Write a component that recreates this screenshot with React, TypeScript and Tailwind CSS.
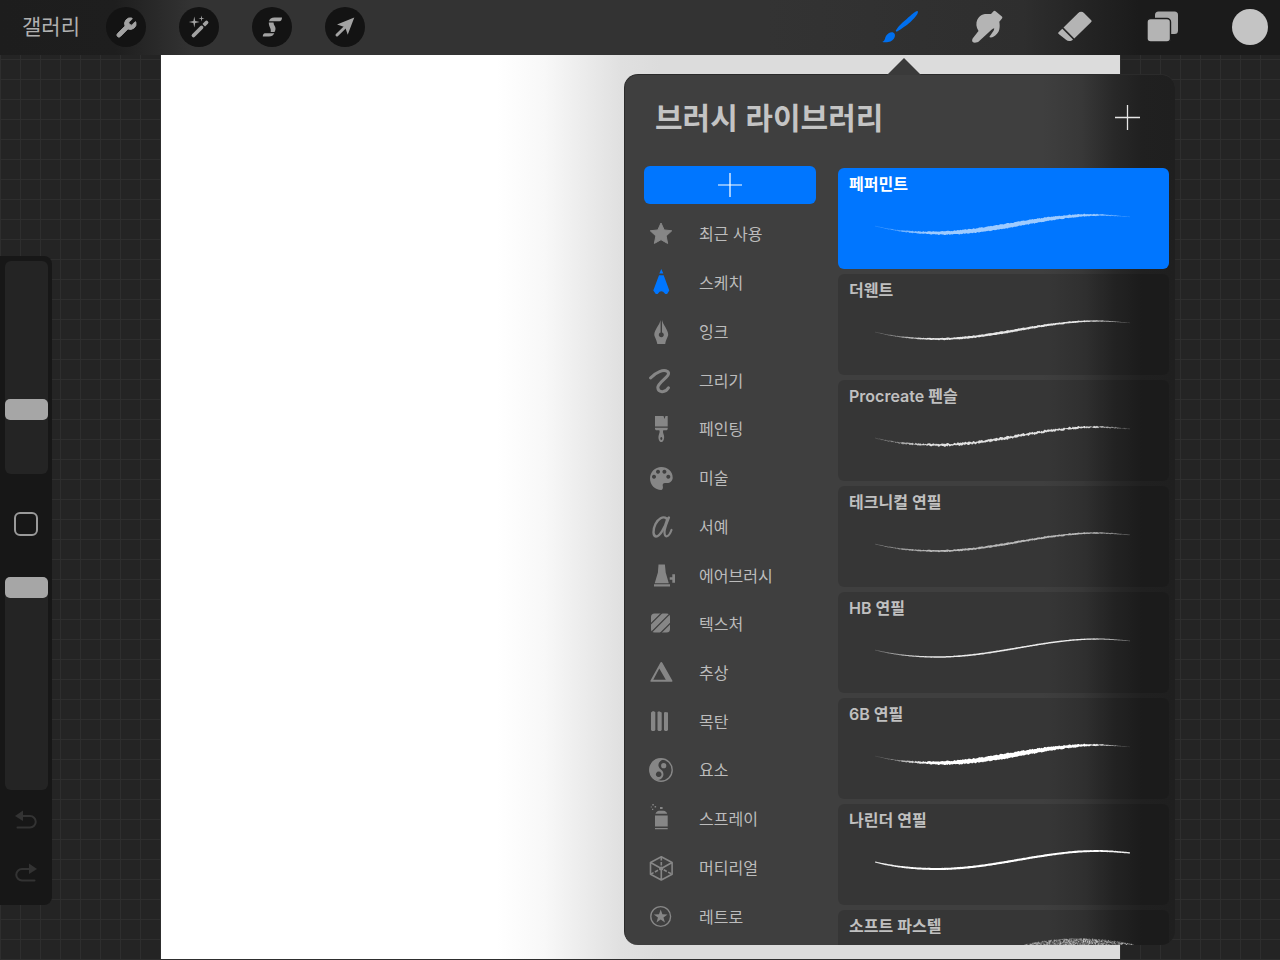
import { useState } from 'react'
import type { ReactNode } from 'react'
import { Wrench } from 'lucide-react'

const star = (cx: number, cy: number, outer: number, inner: number, points = 5) =>
  Array.from({ length: points * 2 }, (_, i) => {
    const r = i % 2 ? inner : outer
    const a = (Math.PI * i) / points - Math.PI / 2
    return `${(cx + r * Math.cos(a)).toFixed(2)},${(cy + r * Math.sin(a)).toFixed(2)}`
  }).join(' ')

const CATEGORIES: { name: string; icon: ReactNode }[] = [
  {
    name: '최근 사용',
    icon: <polygon points={star(12, 12.3, 11.3, 5.4)} stroke="currentColor" strokeLinejoin="round" />,
  },
  {
    name: '스케치',
    icon: <path d="M12.300-2l2 4.400h-4zM10 4.300h4.700l5.600 15.200-2.200 3.500h-1.800l-2.200-2.200-1.800-.6-1.800.6L8.600 23H6.800l-2.500-3.500z" />,
  },
  {
    name: '잉크',
    icon: (
      <path d="M11.600 0v12.400a2.500 2.500 0 1 0 1.400 0V0c1 5 6.200 9.800 6.200 14.500 0 2.500-2.200 4.500-3 9.500H8.300c-.8-5-3-7-3-9.500C5.300 9.800 10.600 5 11.600 0z" />
    ),
  },
  {
    name: '그리기',
    icon: (
      <path
        d="M1.500 9C7 3 14.500 0 18.500 2.500 23.500 6.500 9 12.500 8.800 18.500 9 23.500 16 24.500 19.500 18.800"
        fill="none" stroke="currentColor" strokeWidth="3" strokeLinecap="round"
      />
    ),
  },
  {
    name: '페인팅',
    icon: (
      <path
        fillRule="evenodd"
        d="M6-1h8.500l1 3 1-3h2.200V9.500H6zM6 10.700h12.700v1.500l-1 1h-3.400c-.8 1.500 0 3 .6 5 .8 3-.4 6.800-2.600 6.800s-3.400-3.800-2.600-6.800c.6-2 1.400-3.500.6-5H7l-1-1zM12.300 20a1 1.500 0 1 0 .01 0z"
      />
    ),
  },
  {
    name: '미술',
    icon: (
      <path
        fillRule="evenodd"
        d="M12.300 1C18.600 1 23.700 5.500 23.700 11.500c0 3.500-2.500 5.500-5.700 5.500h-2c-2 0-2.700 1.500-2.200 3 .4 1.300 0 4-1.500 4C6 24 1 19 1 12.500S6 1 12.300 1zM9 3.700a2 2 0 1 0 .01 0zM15.400 3.700a2 2 0 1 0 .01 0zM5 8.800a2 2 0 1 0 .01 0zM19.300 8.800a2 2 0 1 0 .01 0z"
      />
    ),
  },
  {
    name: '서예',
    icon: (
      <g fill="none" stroke="currentColor" strokeLinecap="round">
        <path d="M17.500 3.500C14 .5 9 4 6.500 9c-3 6-2.500 12 .5 12.500 4 .2 9-9 11.500-18" strokeWidth="2.400" />
        <path d="M20 2.500c-2 5-4.300 10-4.500 14.500-.2 6.500 4.300 5.500 7-2" strokeWidth="2.200" />
      </g>
    ),
  },
  {
    name: '에어브러시',
    icon: <path d="M9.500.5h6.400l.8 8 3.100 10.700H5.700L8.900 8.500zM5 20.300h16v2.200H5zM20.700 13.300h2.600v-3H26v8.400h-2.700v-3h-2.600z" />,
  },
  {
    name: '텍스처',
    icon: (
      <>
        <clipPath id="texture">
          <rect x="2" y="1.500" width="19" height="19" rx="3.500" />
        </clipPath>
        <path
          clipPath="url(#texture)"
          d="M0 0h12.800L0 12.800zM14.600 0h7.200L0 21.800v-7.200zM23.600 0H24v7.700L7.700 24H0v-.4zM24 9.500V24H9.500z"
        />
      </>
    ),
  },
  {
    name: '추상',
    icon: (
      <path
        fillRule="evenodd"
        d="M12.300 1c.5 0 .8.300 1 .7l10 17.800c.3.700 0 1.300-.7 1.300H2.200c-.8 0-1-.7-.7-1.300l9.800-17.800c.2-.4.500-.7 1-.7zM10.300 7.500L4.300 18.800h12.500z"
      />
    ),
  },
  {
    name: '목탄',
    icon: <path d="M2 2.500L4 1l2.300 1v18l-1 1H3l-1-1zM8.500 2l1.500-.8 2.700 1.300V20l-1 1H9.500l-1-1zM15 2.500l1.500-.5 2.500.5V20l-1 1h-2l-1-1z" />,
  },
  {
    name: '요소',
    icon: (
      <>
        <circle cx="12" cy="12" r="11.2" fill="none" stroke="currentColor" strokeWidth="1.400" />
        <path
          fillRule="evenodd"
          d="M15 1C11 2.500 9 5 9.500 8c.3 2 2 3 3.500 4.500 2 2 2 6-.5 8-1.500 1.200-3 1.500-4.500 1.500A11 11 0 0 1 15 1zM9.700 13.500a2.800 2.800 0 1 0 .01 0z"
        />
        <circle cx="14.700" cy="7.700" r="2.600" />
      </>
    ),
  },
  {
    name: '스프레이',
    icon: (
      <>
        <path d="M6 8.500h12.700v11H6zM6 21h12.700v1.300H6zM6.500 6.800C7 5 8.500 3.700 10 3.700h4.700c1.500 0 3 1.300 3.500 3.100z" />
        <path d="M11 0h2.600v2H11zM3.300-3h1.500v1.500H3.300zM5.600-1h1.500v1.500H5.600zM3 1.700h1.300V3H3zM1.800-.5h1v1h-1z" />
      </>
    ),
  },
  {
    name: '머티리얼',
    icon: (
      <g fill="none" stroke="currentColor" strokeWidth="1.600" strokeLinejoin="round">
        <path d="M12.300.8l10.800 5.700v11.800L12.300 24 1.500 18.300V6.500zM12.300 12.500V24M12.300 12.500L1.500 6.500M12.300 12.500l10.800-6" />
        <path d="M12.300 1v11.500M1.500 18.300l10.800-5.800 10.800 5.800" strokeDasharray="3.500 1.500" />
        <circle cx="12.300" cy="12.500" r="1.300" fill="currentColor" />
      </g>
    ),
  },
  {
    name: '레트로',
    icon: (
      <>
        <circle cx="11.700" cy="11.500" r="9.900" fill="none" stroke="currentColor" strokeWidth="1.400" />
        <polygon points={star(11.7, 11.6, 7.2, 2.9)} />
      </>
    ),
  },
]

type Stroke = { width: number; rough: number; opacity: number; taper: number; fade: number }

const BRUSHES: { name: string; stroke?: Stroke }[] = [
  { name: '페퍼민트', stroke: { width: 4.2, rough: 0.9, opacity: 0.62, taper: 1.4, fade: 0.3 } },
  { name: '더웬트', stroke: { width: 2, rough: 0.6, opacity: 0.88, taper: 1, fade: 0.2 } },
  { name: 'Procreate 펜슬', stroke: { width: 2, rough: 1.6, opacity: 0.85, taper: 0.7, fade: 0.2 } },
  { name: '테크니컬 연필', stroke: { width: 1.6, rough: 0.8, opacity: 0.65, taper: 0.6, fade: 0.4 } },
  { name: 'HB 연필', stroke: { width: 1.2, rough: 0.2, opacity: 0.9, taper: 0.5, fade: 0.3 } },
  { name: '6B 연필', stroke: { width: 4.6, rough: 1.1, opacity: 1, taper: 1.6, fade: 0.1 } },
  { name: '나린더 연필', stroke: { width: 1.8, rough: 0.2, opacity: 1, taper: 0.25, fade: 0.9 } },
  { name: '소프트 파스텔' },
]

const noise = (n: number) => {
  const v = Math.sin(n * 127.1) * 43758.5453
  return v - Math.floor(v) - 0.5
}

const SEGMENTS = [
  [37, 58, 57, 63, 78, 65, 99, 65],
  [99, 65, 155, 65, 205, 47, 259, 47],
  [259, 47, 271, 47, 282, 48, 293, 49],
]

// Outline of the sample stroke, thick in the middle and thin at both ends
function strokeOutline({ width, rough, taper }: Stroke) {
  const upper: string[] = []
  const lower: string[] = []
  SEGMENTS.forEach(([x0, y0, x1, y1, x2, y2, x3, y3], s) => {
    const steps = s === 1 ? 160 : s === 0 ? 62 : 34
    for (let i = 0; i < steps; i++) {
      const t = i / steps
      const u = 1 - t
      const x = u * u * u * x0 + 3 * u * u * t * x1 + 3 * u * t * t * x2 + t * t * t * x3
      const y = u * u * u * y0 + 3 * u * u * t * y1 + 3 * u * t * t * y2 + t * t * t * y3
      const half = (width / 2) * Math.pow(Math.sin((Math.PI * (x - 36)) / 259), taper) + 0.2
      const jitter = rough * Math.min(1, half)
      upper.push(`${x.toFixed(1)} ${(y - half + noise(x) * jitter).toFixed(2)}`)
      lower.push(`${x.toFixed(1)} ${(y + half + noise(x + 500) * jitter).toFixed(2)}`)
    }
  })
  return `M${upper.join('L')}L${lower.reverse().join('L')}Z`
}

function BrushPreview({ id, stroke }: { id: string; stroke?: Stroke }) {
  return (
    <svg viewBox="0 0 331 101" className="block w-full h-full" aria-hidden="true">
      {stroke ? (
        <>
          <linearGradient id={id}>
            <stop offset="0" stopColor="#fff" stopOpacity={stroke.fade} />
            <stop offset="0.2" stopColor="#fff" />
            <stop offset="0.85" stopColor="#fff" />
            <stop offset="1" stopColor="#fff" stopOpacity={stroke.fade} />
          </linearGradient>
          <path d={strokeOutline(stroke)} fill={`url(#${id})`} fillOpacity={stroke.opacity} />
        </>
      ) : (
        Array.from({ length: 2400 }, (_, i) => {
          const x = 185 + (noise(i) + 0.5) * 112
          const top = 28 + Math.pow((x - 241) / 24, 2) * 1.2
          const y = top + (noise(i + 3000) + 0.5) * 12
          return <rect key={i} x={x} y={y} width="1" height="1" fill="#fff" fillOpacity="0.25" />
        })
      )}
    </svg>
  )
}

const ACTIONS: { label: string; icon: ReactNode }[] = [
  { label: '동작', icon: <Wrench className="w-[23px] h-[23px]" fill="currentColor" strokeWidth={1} /> },
  {
    label: '조정',
    icon: (
      <svg viewBox="0 0 40 40" className="w-10 h-10" fill="currentColor">
        <path d="M14.500 28.500l8-8M25 18l2.500-2.500" stroke="currentColor" strokeWidth="3.800" strokeLinecap="round" />
        <path d="M22 16.500l4.500 4.500" stroke="#131313" strokeWidth="1.200" />
        <polygon points={star(15.3, 15, 5.5, 1.3, 4)} />
        <polygon points={star(22.5, 11.5, 3, 0.8, 4)} />
      </svg>
    ),
  },
  {
    label: '선택',
    icon: (
      <svg viewBox="0 0 40 40" className="w-10 h-10" fill="currentColor">
        <path d="M30 10.500c0 2.200-1 3.800-2.500 3.800H17c.3-2.300 2.500-3.800 5.500-3.800zM16.800 15.500h4.700c.2 3 2 3.800 2 6 0 1.500-.4 2.500-1 3.500h-3.800c.8-4-2-5-1.900-9.500zM22.300 26.200c-.8 2-2.800 3.300-5.300 3.300h-6.200c0-2 .8-3.300 2.200-3.300z" />
      </svg>
    ),
  },
  {
    label: '변형',
    icon: (
      <svg viewBox="0 0 40 40" className="w-10 h-10" fill="currentColor">
        <path d="M29.300 10.500l-6.600 17.300-2.500-7.500-8.200-2.800z" />
        <path d="M12 28l9-8.800" stroke="currentColor" strokeWidth="3" strokeLinecap="round" />
      </svg>
    ),
  },
]

const TOOLS: { label: string; color: string; icon: ReactNode }[] = [
  {
    label: '브러시',
    color: 'text-[#006fee]',
    icon: (
      <path d="M37.700 2.200c.6.700 0 2.300-1 3.700-1.500 2.100-3 3.800-5 5.800-2 2-4 3.600-6.700 5.600-3 2.200-5.500 3.900-8.300 5.400l-1-1c1.100-1.900 2-3.300 3.600-5 2.200-2.400 4.700-4.400 7.400-6.700 2.500-2.200 4.400-4 6.600-5.700 1.500-1.100 3.500-2.600 4.400-2.100zM8.300 24.500c1.800-1.200 3.700-1.500 5.200-.8 1.500.8 1.800 2.300 1.200 4.300-.7 2.500-3.400 4.600-6.400 5-2 .3-4.300.2-6 0 1-.7 2-1.200 2.500-2.800.7-2.200 1.300-4.300 3.500-5.700z" />
    ),
  },
  {
    label: '스머지',
    color: 'text-[#b4b4b4]',
    icon: (
      <path d="M25.500 2.300c.6-.7 1.400-.7 2.100 0l6.300 5.200c.6.600.6 1.300.1 2l-2.700 3.300c.5 2.700.6 5.300 0 7.700-.7 2.900-3 5.700-5.500 7-1.500.8-3.200 1.300-4.500.6l2.700-4.100c1.300-1.500 2.200-2.700 2.200-4.700-1 .2-1.700.6-2.700 1.500L11 32.300c-1.500 1.500-4.800 1.800-6 1-1.200-1-1-2.500-.2-4l5.700-7.300C8 18 7.800 14 9.300 10.700 10.500 8 12.500 6.500 15 5.500c2.500-.9 5.500-.4 8-.5z" />
    ),
  },
  {
    label: '지우개',
    color: 'text-[#b4b4b4]',
    icon: (
      <path d="M7.500 18.500L22 4.200c1.800-1.700 4.300-1.800 6-.2l7 7c.8.800.8 1.500 0 2.200L18.300 29.400zM6.300 19.700L17 30.500c-2 1.900-5 2-7 .3L2.700 25c-.7-.6-.7-1.200-.1-1.800z" />
    ),
  },
  {
    label: '레이어',
    color: 'text-[#b4b4b4]',
    icon: (
      <>
        <rect x="11" y="2.500" width="23" height="22.500" rx="3.500" fill="#a8a8a8" />
        <rect x="3" y="9.500" width="23.500" height="23.500" rx="3.500" stroke="#1c1c1c" strokeWidth="1.400" />
      </>
    ),
  },
]

const SLIDER = [
  'block w-[43px] h-[213px] appearance-none rounded-md bg-[#242424] [writing-mode:vertical-lr] [direction:rtl]',
  '[&::-webkit-slider-thumb]:appearance-none [&::-webkit-slider-thumb]:w-[43px] [&::-webkit-slider-thumb]:h-[21px]',
  '[&::-webkit-slider-thumb]:rounded-[5px] [&::-webkit-slider-thumb]:bg-[#a6a6a6]',
].join(' ')

function Plus({ className }: { className: string }) {
  return (
    <svg viewBox="0 0 25 25" className={className} stroke="currentColor" aria-hidden="true">
      <path d="M12.500 0v25M0 12.500h25" strokeWidth="1.300" />
    </svg>
  )
}

function Toolbar() {
  return (
    <header className="h-[55px] shrink-0 flex items-center justify-between pl-[22px] pr-3 pb-px bg-[linear-gradient(90deg,#1d1d1d_0%,#1e1e1e_9%,#333333_15%,#333333_60%,#2e2e2e_80%,#1b1b1b_89%,#1b1b1b_100%)]">
      <div className="flex items-center">
        <button type="button" className="w-[84px] text-left text-[21px] leading-8 text-[#b0b0b0]">갤러리</button>
        <div className="flex gap-[33px]">
          {ACTIONS.map((a) => (
            <button
              key={a.label}
              type="button"
              aria-label={a.label}
              className="w-10 h-10 rounded-full bg-[#131313] text-[#a3a3a3] flex items-center justify-center"
            >
              {a.icon}
            </button>
          ))}
        </div>
      </div>
      <div className="flex gap-[52px]">
        {TOOLS.map((t) => (
          <button key={t.label} type="button" aria-label={t.label} className={t.color}>
            <svg viewBox="0 0 36 36" className="w-9 h-9 overflow-visible" fill="currentColor">{t.icon}</svg>
          </button>
        ))}
        <button type="button" aria-label="색상" className="w-9 h-9 rounded-full bg-[#c4c4c4]" />
      </div>
    </header>
  )
}

function Sidebar() {
  return (
    <aside className="absolute left-0 top-[201px] w-[52px] pt-[5px] pb-[6px] rounded-r-lg bg-[#171717] flex flex-col items-center">
      <input type="range" aria-label="브러시 크기" defaultValue={28} className={SLIDER} />
      <div className="h-[103px] pb-1 flex items-center justify-center">
        <button type="button" aria-label="수정" className="w-6 h-6 rounded-md border-2 border-[#9a9a9a]" />
      </div>
      <input type="range" aria-label="불투명도" defaultValue={100} className={SLIDER} />
      <button type="button" aria-label="실행 취소" className="mt-1 h-[52px] w-full flex items-center justify-center text-[#333333]">
        <svg viewBox="0 0 22 20" className="w-[22px] h-5" fill="currentColor">
          <path d="M0 6l8-5.500v10.500z" />
          <path d="M6 6h9a5.500 5.500 0 0 1 0 11.500H2.500" fill="none" stroke="currentColor" strokeWidth="2" strokeLinecap="round" />
        </svg>
      </button>
      <button type="button" aria-label="다시 실행" className="h-[53px] w-full flex items-center justify-center text-[#333333]">
        <svg viewBox="0 0 22 20" className="w-[22px] h-5" fill="currentColor">
          <path d="M22 6l-8-5.500v10.500z" />
          <path d="M16 6H7a5.500 5.500 0 0 0 0 11.500h12.500" fill="none" stroke="currentColor" strokeWidth="2" strokeLinecap="round" />
        </svg>
      </button>
    </aside>
  )
}

function BrushLibrary() {
  const [category, setCategory] = useState('스케치')
  const [brush, setBrush] = useState('페퍼민트')

  return (
    <section className="absolute top-[19px] bottom-[15px] right-[105px] w-[551px]">
      {/* Arrow pointing at the brush tool */}
      <svg viewBox="0 0 34 17" className="absolute -top-4 left-[263px] w-[34px] h-[17px]" aria-hidden="true">
        <path d="M0 17L17 0l17 17z" fill="#3a3a3a" />
      </svg>

      <div className="h-full flex flex-col overflow-hidden rounded-[14px] border-t border-l border-[#2b2b2b] bg-[linear-gradient(90deg,#3f3f3f_0%,#3f3f3f_76%,#383838_83%,#282828_89%,#202020_94%,#1f1f1f_100%)]">
        <div className="h-[91px] shrink-0 flex items-center justify-between pl-[30px] pr-[35px] pb-[6px]">
          <h1 className="text-[30px] leading-10 font-semibold text-[#c4c4c4]">브러시 라이브러리</h1>
          <button type="button" aria-label="새 브러시" className="text-[#e6e6e6]">
            <Plus className="w-[25px] h-[25px]" />
          </button>
        </div>

        <div className="flex-1 min-h-0 flex gap-[22px] pl-[19px] pr-[6px]">
          <nav className="w-[172px] shrink-0 flex flex-col pb-1">
            <button
              type="button"
              aria-label="새 세트"
              className="h-[38px] mb-[6px] shrink-0 rounded-md bg-[#0076ff] text-white flex items-center justify-center"
            >
              <Plus className="w-6 h-6" />
            </button>
            {CATEGORIES.map((c) => (
              <button
                key={c.name}
                type="button"
                onClick={() => setCategory(c.name)}
                className="flex-1 min-h-0 flex items-center gap-[26px] pl-[5px] text-base font-normal text-[#bcbcbc]"
              >
                <svg
                  viewBox="0 0 24 24"
                  fill="currentColor"
                  className={`w-6 h-6 overflow-visible ${c.name === category ? 'text-[#0076ff]' : 'text-[#868686]'}`}
                >
                  {c.icon}
                </svg>
                {c.name}
              </button>
            ))}
          </nav>

          <div className="flex-1 min-w-0 pt-[2px] flex flex-col gap-[5px] overflow-hidden">
            {BRUSHES.map((b, i) => (
              <button
                key={b.name}
                type="button"
                onClick={() => setBrush(b.name)}
                className={`relative h-[101px] shrink-0 rounded-md text-left ${b.name === brush ? 'bg-[#0076ff] text-white' : 'bg-black/13 text-[#c0c0c0]'}`}
              >
                <span className="absolute top-1 left-[11px] text-base leading-6 font-semibold">{b.name}</span>
                <BrushPreview id={`stroke-${i}`} stroke={b.stroke} />
              </button>
            ))}
          </div>
        </div>
      </div>
    </section>
  )
}

export default function App() {
  return (
    <div className="h-screen flex flex-col overflow-hidden bg-[#202020] font-[Inter,'Noto_Sans_CJK_KR',sans-serif]">
      <Toolbar />
      <main className="relative flex-1 min-h-0 pl-[161px] pr-[160px] pb-px bg-[#242424] bg-[linear-gradient(#2e2e2e_1px,transparent_1px),linear-gradient(90deg,#2e2e2e_1px,transparent_1px)] bg-[size:20px_20px] bg-[position:0_4px]">
        {/* Canvas */}
        <div className="h-full bg-[linear-gradient(90deg,#ffffff_0%,#ffffff_35%,#f8f8f8_40%,#ececec_44%,#e0e0e0_48%,#dcdcdc_52%,#dcdcdc_100%)]" />
        <Sidebar />
        <BrushLibrary />
      </main>
    </div>
  )
}
